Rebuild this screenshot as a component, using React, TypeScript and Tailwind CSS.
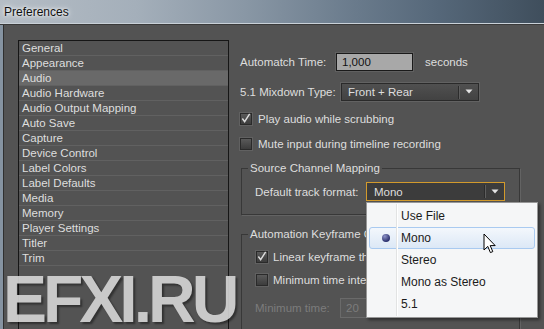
import React from "react";

const categories = [
  "General",
  "Appearance",
  "Audio",
  "Audio Hardware",
  "Audio Output Mapping",
  "Auto Save",
  "Capture",
  "Device Control",
  "Label Colors",
  "Label Defaults",
  "Media",
  "Memory",
  "Player Settings",
  "Titler",
  "Trim",
];

const menuItems = ["Use File", "Mono", "Stereo", "Mono as Stereo", "5.1"];

const Checkbox = ({ checked }: { checked: boolean }) => (
  <div className="w-[12px] h-[12px] border border-[#2a2a2a] bg-gradient-to-b from-[#5a5a5a] to-[#3c3c3c] shadow-[0_0_0_1px_#616161] flex items-center justify-center">
    {checked && (
      <svg width="11" height="11" viewBox="0 0 11 11">
        <path d="M1.5 5.5 L4 9 L9.5 0.5" fill="none" stroke="#dcdcdc" strokeWidth="1.6" />
      </svg>
    )}
  </div>
);

const DropArrow = () => (
  <div className="flex items-center h-full">
    <div className="w-px h-[13px] bg-[#2c2c2c] shadow-[1px_0_0_#5e5e5e]" />
    <svg width="18" height="8" viewBox="0 0 18 8" className="ml-px">
      <path d="M5.5 1.5 H12.5 L9 5.5 Z" fill="#e4e4e4" />
    </svg>
  </div>
);

export default function App() {
  return (
    <div
      className="relative w-[544px] h-[329px] overflow-hidden bg-[#535353] text-[11.5px] leading-[14px] text-[#dedede]"
      style={{ fontFamily: '"Liberation Sans", Arial, sans-serif' }}
    >
      {/* title bar */}
      <div className="h-[23px] flex items-center pl-[4px] bg-[linear-gradient(90deg,#b5bdc5_0%,#a4afba_25%,#8997a5_45%,#6a7b8c_65%,#56687a_80%,#3f4e5c_100%)]">
        <span className="text-[12px] text-[#101010] [text-shadow:0_0_6px_#ffffff,0_0_3px_#ffffff]">Preferences</span>
      </div>
      <div className="h-px bg-[#c9d1d8]" />
      <div className="h-px bg-[#3a3a3a]" />

      <div className="flex h-[304px]">
        <div className="w-[3px] bg-[#8593a1] border-r border-[#2f2f2f] box-content" />

        <div className="flex items-start pl-[14px] pt-[15px]">
          {/* category list */}
          <div className="w-[211px] h-[300px] border border-[#161616] bg-[#535353]">
            {categories.map((c) => (
              <div
                key={c}
                className={`h-[15px] border-b border-[#616161] pl-[3px] flex items-center ${
                  c === "Audio" ? "bg-[#696969]" : ""
                }`}
              >
                {c}
              </div>
            ))}
          </div>

          {/* right panel */}
          <div className="ml-[11px] w-[290px] flex flex-col">
            <div className="mt-[13px] h-[18px] flex items-center">
              <span className="w-[96px]">Automatch Time:</span>
              <div className="w-[77px] h-[18px] border border-[#1a1a1a] bg-[#a8a8a8] shadow-[0_0_0_1px_#606060] text-[#111] pl-[5px] flex items-center">
                1,000
              </div>
              <span className="ml-[12px]">seconds</span>
            </div>

            <div className="mt-[12px] h-[18px] flex items-center">
              <span className="w-[101px]">5.1 Mixdown Type:</span>
              <div className="w-[138px] h-[18px] border border-[#2a2a2a] bg-gradient-to-b from-[#505050] to-[#424242] shadow-[0_0_0_1px_#626262] pl-[6px] flex items-center justify-between">
                <span>Front + Rear</span>
                <DropArrow />
              </div>
            </div>

            <div className="mt-[11px] h-[13px] flex items-center">
              <Checkbox checked />
              <span className="ml-[6px]">Play audio while scrubbing</span>
            </div>

            <div className="mt-[12px] h-[13px] flex items-center">
              <Checkbox checked={false} />
              <span className="ml-[6px]">Mute input during timeline recording</span>
            </div>

            <fieldset className="mt-[11px] ml-px w-[279px] border border-[#383838] shadow-[1px_1px_0_#636363]">
              <legend className="ml-[6px] px-[2px]">Source Channel Mapping</legend>
              <div className="pl-[13px] pt-[7px] pb-[13px] flex items-center">
                <span className="w-[111px]">Default track format:</span>
                <div className="w-[139px] h-[19px] border border-[#d29a2c] bg-[#3c3c3c] pl-[7px] flex items-center justify-between">
                  <span>Mono</span>
                  <DropArrow />
                </div>
              </div>
            </fieldset>

            <fieldset className="mt-[12px] ml-px w-[279px] h-[120px] border border-[#383838] shadow-[1px_1px_0_#636363]">
              <legend className="ml-[6px] px-[2px]">Automation Keyframe Optimization</legend>
              <div className="pl-[14px] pt-[9px] flex flex-col">
                <div className="h-[13px] flex items-center">
                  <Checkbox checked />
                  <span className="ml-[5px]">Linear keyframe thinning</span>
                </div>
                <div className="mt-[10px] h-[13px] flex items-center">
                  <Checkbox checked={false} />
                  <span className="ml-[5px]">Minimum time interval thinning</span>
                </div>
                <div className="mt-[12px] h-[20px] flex items-center -ml-px">
                  <span className="w-[85px] text-[#7c7c7c]">Minimum time:</span>
                  <div className="w-[60px] h-[20px] border border-[#6a6a6a] bg-[#575757] pl-[5px] text-[#7c7c7c] flex items-center">
                    20
                  </div>
                </div>
              </div>
            </fieldset>
          </div>
        </div>
      </div>

      {/* dropdown menu */}
      <div
        className="absolute left-[366px] top-[202px] w-[172px] h-[116px] bg-[#f5f6f7] border border-[#979797] shadow-[2px_2px_3px_rgba(0,0,0,0.45)] pt-[2px] text-[12px] text-[#1b1b1b]"
        style={{ fontFamily: '"Liberation Sans", Arial, sans-serif' }}
      >
        <div className="absolute left-[29px] top-[1px] bottom-[1px] w-px bg-[#e2e3e3] shadow-[1px_0_0_#ffffff] z-10" />
        {menuItems.map((m) => (
          <div
            key={m}
            className={`mx-[2px] h-[22px] flex items-center rounded-[3px] border ${
              m === "Mono"
                ? "border-[#a9caf0] bg-gradient-to-b from-[#f3f7fc] to-[#dce8f6]"
                : "border-transparent"
            }`}
          >
            <div className="w-[31px] flex justify-center">
              {m === "Mono" && (
                <div className="w-[8px] h-[8px] rounded-full bg-[radial-gradient(circle_at_35%_30%,#8d93c8,#2c316e_70%)]" />
              )}
            </div>
            <span>{m}</span>
          </div>
        ))}
      </div>

      {/* mouse cursor */}
      <svg className="absolute left-[483px] top-[233px]" width="14" height="22" viewBox="0 0 14 22">
        <path
          d="M1 1 L1 17 L4.8 13.4 L7.4 19.6 L9.8 18.6 L7.2 12.6 L12.2 12.6 Z"
          fill="#ffffff"
          stroke="#000000"
          strokeWidth="1"
          strokeLinejoin="round"
        />
      </svg>

      {/* watermark */}
      <div
        className="absolute left-[3px] top-[266px] text-[66px] leading-none font-bold tracking-[-4px] text-[#d6d6d6] opacity-90 [text-shadow:2px_2px_2px_rgba(0,0,0,0.45)]"
        style={{ fontFamily: '"Liberation Sans", Arial, sans-serif' }}
      >
        EFXI.RU
      </div>
    </div>
  );
}
